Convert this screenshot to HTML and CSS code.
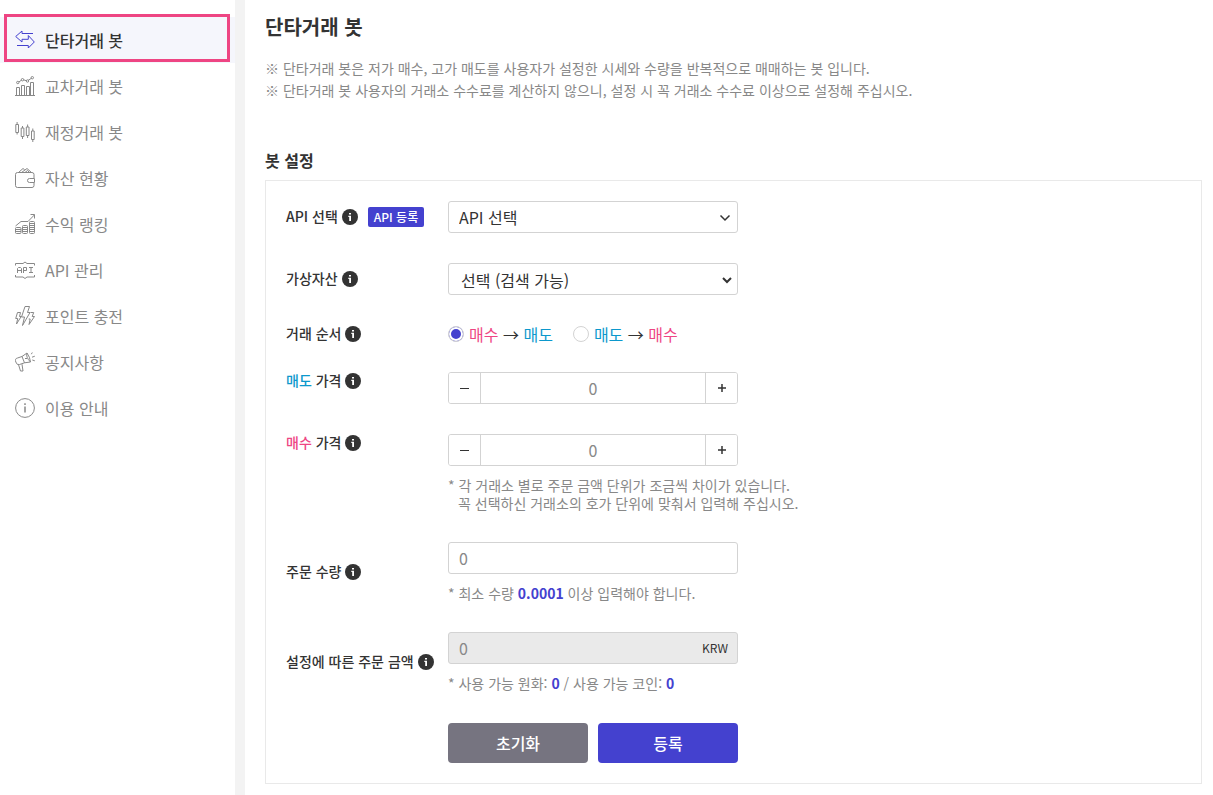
FILE: index.html
```html
<!DOCTYPE html>
<html lang="ko">
<head>
<meta charset="utf-8">
<title>단타거래 봇</title>
<link rel="stylesheet" href="styles.css">
</head>
<body>
<svg class="sprite" aria-hidden="true">
  <symbol id="info" viewBox="0 0 16 16"><circle cx="8" cy="8" r="8" fill="#333"/><path d="M7 4h2v1.600H7zM6.300 6.700H9V12H7.200V7.900h-.9z" fill="#fff"/></symbol>
</svg>
<div class="layout">
  <nav class="sidebar">
    <a class="item active" href="#"><svg class="icon" viewBox="0 0 20 20"><path d="M18 3.500H7V1L.7 6.500 7 12V9.300h6.300V5.500l6 6.500-6 6v-2.500H2"/></svg>단타거래 봇</a>
    <a class="item" href="#"><svg class="icon" viewBox="0 0 20 20"><path d="M0 19.500h20M1.500 19.500v-8h3v8M6.500 19.500v-10h3v10M11.500 19.500v-9h3v9M15.500 19.500v-13h3v13"/><circle cx="2.800" cy="6.500" r="1.200"/><circle cx="7.500" cy="3.700" r="1.200"/><circle cx="12.500" cy="5" r="1.200"/><circle cx="17.300" cy="1.700" r="1.200"/><path d="M3.800 6l2.900-2M8.500 3.800l3 1M13.200 4.300l3.500-2.200"/></svg>교차거래 봇</a>
    <a class="item" href="#"><svg class="icon" viewBox="0 0 20 20"><path d="M.8 2.500h2.700v8H.8zM2.100 0v2.500M2.100 10.500v2M6.200 6h2.700v8.500H6.200zM7.500 4v2M7.500 14.500v2.500M11.300 5H14v8.500h-2.700zM12.600 2.500V5M12.600 13.500v2.500M16.500 9h2.700v8.500h-2.700zM17.800 6.500V9M17.800 17.500V20"/></svg>재정거래 봇</a>
    <a class="item" href="#"><svg class="icon" viewBox="0 0 20 20"><path d="M19 10V6.500q0-2-2-2H2.500q-2 0-2 2v11q0 2 2 2H17q2 0 2-2V15M14.500 10.500h5v4h-5a2 2 0 0 1 0-4zM3.500 4.500L8 .5l1.700 1.300M6.500 4.500L12 .5l4.500 4M10 4.500l2.500-2 2 2"/></svg>자산 현황</a>
    <a class="item" href="#"><svg class="icon" viewBox="0 0 20 20"><path d="M.5 12L6 7.500h7L19.500.8M15.500.5h4v4M1.500 13.500h3.500q1 0 1 1v4q0 1-1 1H1.500q-1 0-1-1v-4q0-1 1-1zM.5 15.500H6M.5 17.500H6M8.500 11.500h3q1 0 1 1v6q0 1-1 1h-3q-1 0-1-1v-6q0-1 1-1zM7.500 13.500h5M7.500 15.500h5M7.500 17.500h5M15.500 7.500h3q1 0 1 1v10q0 1-1 1h-3q-1 0-1-1v-10q0-1 1-1zM14.500 9.500h5M14.500 11.500h5M14.500 13.500h5M14.500 15.500h5M14.500 17.500h5"/></svg>수익 랭킹</a>
    <a class="item" href="#"><svg class="icon" viewBox="0 0 20 20"><path d="M.5 5.500v-2h7.500l2-1.500 2 1.500h7.500v2M.5 15v2h7.500l2 1.500 2-1.500h7.500v-2M2.500 13V8.500L3.500 7.500h2l1 1V13M2.500 10.500h4M8.500 13V7.500h3v3h-3M14 7.500h4M16 7.500v5M14 12.500h4"/></svg>API 관리</a>
    <a class="item" href="#"><svg class="icon" viewBox="0 0 20 20"><path d="M10 .5h4.500l-2 6h2.500L7.500 19.500l2-8.500H6.500zM2.500 6.500h3l-1 4h1.700L1.500 18l1.200-5.500H.7zM15.500 6.500h3.200l-1.500 4h2.300l-5.500 8 1.200-5.500h-1.500"/></svg>포인트 충전</a>
    <a class="item" href="#"><svg class="icon" viewBox="0 0 20 20"><path d="M2.500 6l4.500-1.500 5-3.500q3 4 3.500 9l-6 .8-5 1.700Q2 13.500.8 10T2.500 6zM7 4.500l2.500 6.300M12 1q-1.500 4 3.500 9M3.500 12.600l2 6.400h2.500l-1-6.800M10 6.500h2M16.300 2.200l1-1.700M17 5.200l2.800-1M17.300 8l2.500.8"/></svg>공지사항</a>
    <a class="item" href="#"><svg class="icon" viewBox="0 0 20 20"><circle cx="10" cy="10" r="9.400"/><path d="M10 8.500v6M10 5.200v1.700" stroke-width="1.500"/></svg>이용 안내</a>
  </nav>
  <main class="content">
    <h1>단타거래 봇</h1>
    <p class="intro">※ 단타거래 봇은 저가 매수, 고가 매도를 사용자가 설정한 시세와 수량을 반복적으로 매매하는 봇 입니다.<br>※ 단타거래 봇 사용자의 거래소 수수료를 계산하지 않으니, 설정 시 꼭 거래소 수수료 이상으로 설정해 주십시오.</p>
    <h2>봇 설정</h2>
    <form class="card">
      <div class="row">
        <div class="label"><label for="api">API 선택</label><svg class="info"><use href="#info"/></svg><button type="button" class="tag">API 등록</button></div>
        <div class="field select"><select id="api"><option>API 선택</option></select><svg class="chevron" viewBox="0 0 12 8"><path d="M1.500 1.500L6 6l4.500-4.500"/></svg></div>
      </div>
      <div class="row">
        <div class="label"><label for="asset">가상자산</label><svg class="info"><use href="#info"/></svg></div>
        <div class="field select native"><select id="asset"><option>선택 (검색 가능)</option></select><svg class="chevron" viewBox="0 0 12 8"><path d="M2 2l4 4 4-4"/></svg></div>
      </div>
      <div class="row order" role="radiogroup" aria-labelledby="order-title">
        <div class="label"><span id="order-title">거래 순서</span><svg class="info"><use href="#info"/></svg></div>
        <div class="radios">
          <label><input type="radio" name="order" checked><span><span class="buy">매수</span> → <span class="sell">매도</span></span></label>
          <label><input type="radio" name="order"><span><span class="sell">매도</span> → <span class="buy">매수</span></span></label>
        </div>
      </div>
      <div class="row short">
        <div class="label"><label for="sell"><span class="sell">매도</span> 가격</label><svg class="info"><use href="#info"/></svg></div>
        <div class="field stepper"><button type="button" aria-label="감소"><svg viewBox="0 0 10 10"><path d="M0 5.500h9"/></svg></button><input id="sell" type="text" placeholder="0"><button type="button" aria-label="증가"><svg viewBox="0 0 10 10"><path class="plus" d="M1 5h8M5 1v8"/></svg></button></div>
      </div>
      <div class="row short">
        <div class="label"><label for="buy"><span class="buy">매수</span> 가격</label><svg class="info"><use href="#info"/></svg></div>
        <div>
          <div class="field stepper"><button type="button" aria-label="감소"><svg viewBox="0 0 10 10"><path d="M0 5.500h9"/></svg></button><input id="buy" type="text" placeholder="0"><button type="button" aria-label="증가"><svg viewBox="0 0 10 10"><path class="plus" d="M1 5h8M5 1v8"/></svg></button></div>
          <p class="note">* 각 거래소 별로 주문 금액 단위가 조금씩 차이가 있습니다.<br>꼭 선택하신 거래소의 호가 단위에 맞춰서 입력해 주십시오.</p>
        </div>
      </div>
      <div class="row middle">
        <div class="label"><label for="amount">주문 수량</label><svg class="info"><use href="#info"/></svg></div>
        <div>
          <div class="field"><input id="amount" type="text" placeholder="0"></div>
          <p class="note">* 최소 수량 <b>0.0001</b> 이상 입력해야 합니다.</p>
        </div>
      </div>
      <div class="row middle">
        <div class="label"><label for="total">설정에 따른 주문 금액</label><svg class="info"><use href="#info"/></svg></div>
        <div>
          <div class="field readonly"><input id="total" type="text" placeholder="0" readonly><span class="unit">KRW</span></div>
          <p class="note">* 사용 가능 원화: <b>0</b> / 사용 가능 코인: <b>0</b></p>
        </div>
      </div>
      <div class="actions"><button type="reset" class="reset">초기화</button><button type="submit">등록</button></div>
    </form>
  </main>
</div>
</body>
</html>
```

FILE: styles.css
```css
* { box-sizing: border-box; }
body {
  margin: 0;
  background: #fff;
  color: #333;
  font: 14px/18px "Noto Sans CJK KR", sans-serif;
}
h1, h2, p { margin: 0; }
button, input, select { font: inherit; color: inherit; margin: 0; }
button { cursor: pointer; padding: 0; border: 0; }
.sprite { display: none; }

.layout { display: flex; min-height: 100vh; }
.sidebar {
  flex: 0 0 245px;
  padding-top: 17px;
  border-right: 10px solid #f3f3f3;
}
.item {
  position: relative;
  display: flex;
  align-items: center;
  gap: 10px;
  height: 46px;
  padding-left: 15px;
  color: #888;
  font-size: 16px;
  text-decoration: none;
}
.item.active { background: #f5f6fc; color: #333; font-weight: 500; }
.item.active::after {
  content: "";
  position: absolute;
  inset: -3px 5px 1px 4px;
  border: 3px solid #ee4583;
}
.icon { width: 20px; height: 20px; fill: none; stroke: #888; stroke-width: 1; }
.active .icon { stroke: #4441cf; }

.content { flex: 1; min-width: 0; padding: 12px 11px 11px 20px; }
h1 { font-size: 20px; line-height: 30px; font-weight: 700; }
.intro { margin-top: 15px; color: #888; line-height: 22px; }
h2 { margin: 47px 0 7px; font-size: 16px; line-height: 25px; font-weight: 700; }

.card {
  display: grid;
  gap: 30px;
  padding: 20px;
  border: 1px solid #e9e9e9;
}
.row { display: grid; grid-template-columns: 162px 1fr; align-items: start; }
.row.middle { align-items: center; }
.label { display: flex; align-items: center; gap: 4px; height: 32px; font-weight: 500; white-space: nowrap; }
.label > label, .label > span { padding-bottom: 2px; }
.short .label, .middle .label { height: 18px; }
.order .label { height: 17px; }
.info { width: 16px; height: 16px; }
.tag {
  height: 20px;
  margin-left: 6px;
  padding: 0 6px;
  border-radius: 2px;
  background: #4441cf;
  color: #fff;
  font-size: 12px;
}
.field {
  position: relative;
  display: flex;
  width: 290px;
  height: 32px;
  border: 1px solid #d3d3d3;
  border-radius: 3px;
  overflow: hidden;
}
.field input, .field select {
  flex: 1;
  min-width: 0;
  padding: 0 10px;
  border: 0;
  background: transparent;
  font-size: 16px;
  outline: 0;
}
.field select { appearance: none; }
.native select { padding: 2px 0 0 12px; }
.field input::placeholder { color: #888; opacity: 1; }
.chevron {
  position: absolute;
  top: 12px;
  right: 6px;
  width: 12px;
  height: 8px;
  fill: none;
  stroke: #333;
  stroke-width: 1.5;
  pointer-events: none;
}
.native .chevron { right: 4px; stroke-width: 2; }
.radios { display: flex; gap: 20px; height: 17px; align-items: center; font-size: 16px; }
.radios label { display: flex; align-items: center; gap: 5px; }
.radios input {
  appearance: none;
  width: 16px;
  height: 16px;
  margin: 0;
  border: 1px solid #d3d3d3;
  border-radius: 50%;
}
.radios input:checked { background: #4441cf; box-shadow: inset 0 0 0 2px #fff; }
.buy { color: #ee4583; }
.sell { color: #0c98cc; }
.stepper input { text-align: center; }
.stepper button { display: grid; place-items: center; width: 32px; background: #fff; }
.stepper button:first-child { border-right: 1px solid #d3d3d3; }
.stepper button:last-child { border-left: 1px solid #d3d3d3; }
.stepper svg { width: 10px; height: 10px; fill: none; stroke: #333; stroke-width: 1; }
.stepper .plus { stroke-width: 1.5; }
.note { margin-top: 10px; padding-left: 10px; text-indent: -10px; color: #888; }
.note b { color: #4441cf; font-weight: 700; }
.readonly { background: #eaeaea; }
.unit { padding: 6px 9px; font-size: 12px; line-height: 18px; }
.actions { display: flex; gap: 10px; padding: 1px 0 0 162px; }
.actions button {
  width: 140px;
  height: 40px;
  border-radius: 4px;
  background: #4441cf;
  color: #fff;
  font-size: 16px;
  font-weight: 500;
}
.actions .reset { background: #767480; }
```
